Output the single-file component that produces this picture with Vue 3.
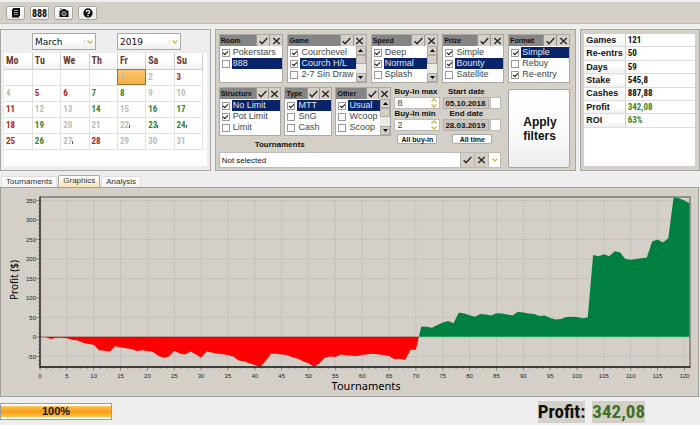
<script setup>
import { ref } from 'vue'

const weekdays = ['Mo', 'Tu', 'We', 'Th', 'Fr', 'Sa', 'Su']
const wins = [7, 8, 14, 16, 17, 19, 23, 24, 26]
const losses = [3, 5, 6, 11, 18, 25, 28]
const marked = [22, 23, 24, 27]
const weeks = [0, 1, 2, 3, 4].map((w) =>
  weekdays.map((_, d) => {
    const day = w * 7 + d - 3
    return day > 0 ? day : null
  })
)
const dayClass = (day) => ({
  win: wins.includes(day),
  loss: losses.includes(day),
  today: day === 1,
  marked: marked.includes(day)
})

const topFilters = ref([
  { name: 'Room', grow: 65, items: [['Pokerstars', true], ['888', false]], active: 1 },
  { name: 'Game', grow: 80, scroll: true, items: [['Courchevel', true], ['Courch H/L', true], ['2-7 Sin Draw', false]], active: 1 },
  { name: 'Speed', grow: 68, scroll: true, items: [['Deep', true], ['Normal', true], ['Splash', false]], active: 1 },
  { name: 'Prize', grow: 62, items: [['Simple', true], ['Bounty', true], ['Satellite', false]], active: 1 },
  { name: 'Format', grow: 62, items: [['Simple', true], ['Rebuy', false], ['Re-entry', true]], active: 0 }
])
const lowFilters = ref([
  { name: 'Structure', grow: 62, items: [['No Limit', true], ['Pot Limit', true], ['Limit', false]], active: 0 },
  { name: 'Type', grow: 47, items: [['MTT', true], ['SnG', false], ['Cash', false]], active: 0 },
  { name: 'Other', grow: 55, scroll: true, items: [['Usual', true], ['Wcoop', false], ['Scoop', false]], active: 0 }
])
const filterRows = [
  { key: 'top', list: topFilters },
  { key: 'low', list: lowFilters }
]

const stats = [
  ['Games', '121'],
  ['Re-entrs', '50'],
  ['Days', '59'],
  ['Stake', '545,8'],
  ['Cashes', '887,88'],
  ['Profit', '342,08'],
  ['ROI', '63%']
]

const profits = [
  0, 0, -5, -2, -2, -3, -7, -9, -15, -18, -20, -34, -35, -37, -24, -26, -29, -31, -36, -34,
  -36, -38, -48, -53, -50, -35, -42, -45, -37, -44, -53, -37, -40, -42, -44, -46, -50, -60, -62, -67,
  -72, -76, -62, -43, -43, -45, -46, -52, -56, -62, -67, -76, -68, -53, -50, -51, -45, -47, -48, -49,
  -46, -44, -43, -45, -46, -49, -57, -56, -59, -33, -33, 27, 26, 24, 31, 37, 41, 35, 63, 60,
  56, 52, 59, 58, 55, 61, 60, 58, 55, 65, 63, 60, 59, 54, 55, 49, 45, 46, 51, 52,
  51, 48, 50, 210, 207, 212, 207, 220, 217, 200, 198, 200, 202, 204, 245, 250, 242, 253, 359, 356,
  350, 342
]
const px = (i) => 39 + i * 5.37
const py = (v) => 149 - v * 0.39
const crossing = 70 + 33 / 60
const lossArea =
  profits.slice(0, 71).map((v, i) => `${px(i)},${py(v)}`).join(' ') +
  ` ${px(crossing)},${py(0)} ${px(0)},${py(0)}`
const winArea =
  `${px(crossing)},${py(0)} ` +
  profits.slice(71).map((v, i) => `${px(i + 71)},${py(v)}`).join(' ') +
  ` ${px(121)},${py(0)}`
const xTicks = Array.from({ length: 25 }, (_, i) => i * 5)
const yTicks = [350, 300, 250, 200, 150, 100, 50, 0, -50]
const xMinor = Array.from({ length: 97 }, (_, i) => i * 1.25)
const yMinor = Array.from({ length: 43 }, (_, i) => i * 10 - 70)
</script>

<template>
  <div class="app">
    <header class="toolbar">
      <button type="button" aria-label="Report">
        <svg width="10" height="10" viewBox="0 0 10 10">
          <path d="M2 0h7v8h-1v1.5H1V1h1z" fill="#111" />
          <path d="M3 2.5h4M3 4.5h4M3 6.5h4" stroke="#bbb" stroke-width=".8" />
        </svg>
      </button>
      <button type="button">888</button>
      <button type="button" aria-label="Screenshot">
        <svg width="10" height="10" viewBox="0 0 10 10">
          <path d="M.5 2.5h2L3.500 1h3l1 1.500h2V9h-9z" fill="#111" />
          <circle cx="5" cy="5.700" r="2.100" fill="none" stroke="#ddd" stroke-width=".9" />
          <circle cx="5" cy="5.700" r=".6" fill="#ddd" />
          <path d="M1.200 1h1.500" stroke="#111" />
        </svg>
      </button>
      <button type="button" aria-label="Help">
        <svg width="10" height="10" viewBox="0 0 10 10">
          <circle cx="5" cy="5" r="4.700" fill="#111" />
          <path d="M3.300 4C3.300 1.800 6.800 1.900 6.700 3.900 6.600 5 5 5 5 6.200" fill="none" stroke="#fff" stroke-width="1.200" />
          <circle cx="5" cy="7.700" r=".8" fill="#fff" />
        </svg>
      </button>
    </header>

    <main>
      <div class="top">
        <section class="panel calendar">
          <div class="period">
            <span class="drop">
              <select aria-label="Month"><option>March</option></select>
              <svg width="6" height="4" viewBox="0 0 6 4"><path d="M.5.5 3 3 5.500.5" /></svg>
            </span>
            <span class="drop">
              <select aria-label="Year"><option>2019</option></select>
              <svg width="6" height="4" viewBox="0 0 6 4"><path d="M.5.5 3 3 5.500.5" /></svg>
            </span>
          </div>
          <div class="sheet">
            <table class="days">
              <thead>
                <tr><th v-for="d in weekdays" :key="d" scope="col">{{ d }}</th></tr>
              </thead>
              <tbody>
                <tr v-for="(week, w) in weeks" :key="w">
                  <td v-for="(day, d) in week" :key="d" :class="dayClass(day)">{{ day }}</td>
                </tr>
              </tbody>
            </table>
          </div>
        </section>

        <section class="panel filters">
          <div v-for="row in filterRows" :key="row.key" :class="['area', row.key]">
            <fieldset
              v-for="f in row.list.value"
              :key="f.name"
              class="box"
              :style="{ flexGrow: f.grow }"
              :aria-label="f.name"
            >
              <div class="box-head">
                <span>{{ f.name }}</span>
                <button type="button" :aria-label="'Select all: ' + f.name">
                  <svg width="9" height="8" viewBox="0 0 9 8"><path d="M.7 4.200 3 6.700 8.300 1" /></svg>
                </button>
                <button type="button" :aria-label="'Clear: ' + f.name">
                  <svg width="9" height="8" viewBox="0 0 9 8"><path d="M1.300 1 7.700 7M7.700 1 1.300 7" /></svg>
                </button>
              </div>
              <div class="box-body">
                <div class="options">
                  <label v-for="(item, i) in f.items" :key="item[0]">
                    <input v-model="item[1]" type="checkbox" />
                    <span :class="{ active: i === f.active }">{{ item[0] }}</span>
                  </label>
                </div>
                <div v-if="f.scroll" class="scroll" aria-hidden="true">
                  <i><svg width="5" height="3" viewBox="0 0 5 3"><path d="M0 3 2.500 0 5 3z" /></svg></i>
                  <i class="thumb"></i>
                  <i><svg width="5" height="3" viewBox="0 0 5 3"><path d="M0 0 2.500 3 5 0z" /></svg></i>
                </div>
              </div>
            </fieldset>

            <template v-if="row.key === 'low'">
              <div class="limits">
                <label for="buy-max">Buy-In max</label>
                <span class="spin">
                  <input id="buy-max" type="text" value="8" />
                  <svg width="6" height="10" viewBox="0 0 6 10"><path d="M.5 3.500 3 1l2.500 2.500M.5 6.500 3 9l2.500-2.500" /></svg>
                </span>
                <label for="buy-min">Buy-In min</label>
                <span class="spin">
                  <input id="buy-min" type="text" value="2" />
                  <svg width="6" height="10" viewBox="0 0 6 10"><path d="M.5 3.500 3 1l2.500 2.500M.5 6.500 3 9l2.500-2.500" /></svg>
                </span>
                <button type="button" class="small">All buy-in</button>
              </div>
              <div class="dates">
                <label for="date-start">Start date</label>
                <span class="date">
                  <input id="date-start" type="text" value="05.10.2018" />
                  <button type="button" aria-label="Pick start date"></button>
                </span>
                <label for="date-end">End date</label>
                <span class="date">
                  <input id="date-end" type="text" value="28.03.2019" />
                  <button type="button" aria-label="Pick end date"></button>
                </span>
                <button type="button" class="small">All time</button>
              </div>
            </template>
          </div>

          <div class="area pick">
            <label for="tour">Tournaments</label>
            <div class="combo">
              <input id="tour" type="text" value="Not selected" />
              <button type="button" aria-label="Select all tournaments">
                <svg width="9" height="8" viewBox="0 0 9 8"><path d="M.7 4.200 3 6.700 8.300 1" /></svg>
              </button>
              <button type="button" aria-label="Clear tournaments">
                <svg width="9" height="8" viewBox="0 0 9 8"><path d="M1.300 1 7.700 7M7.700 1 1.300 7" /></svg>
              </button>
              <button type="button" class="open" aria-label="Open list">
                <svg width="6" height="4" viewBox="0 0 6 4"><path d="M.5.5 3 3 5.500.5" /></svg>
              </button>
            </div>
          </div>
          <button type="button" class="apply">Apply<br />filters</button>
        </section>

        <section class="panel summary">
          <div class="sheet">
            <table class="stats">
              <tbody>
                <tr v-for="s in stats" :key="s[0]">
                  <th scope="row">{{ s[0] }}</th>
                  <td :class="{ win: s[0] === 'Profit' || s[0] === 'ROI' }">{{ s[1] }}</td>
                </tr>
              </tbody>
            </table>
          </div>
        </section>
      </div>

      <nav class="tabs">
        <a href="#tournaments">Tournaments</a>
        <a href="#graphics" class="current">Graphics</a>
        <a href="#analysis">Analysis</a>
      </nav>

      <section class="chart">
        <svg viewBox="0 0 697 208" role="img" aria-label="Profit by tournaments">
          <g stroke="#c5c2bf" stroke-width="1">
            <line v-for="t in xTicks" :key="'x' + t" :x1="px(t)" :x2="px(t)" y1="12" y2="179" />
            <line v-for="t in yTicks" :key="'y' + t" x1="39" x2="689" :y1="py(t)" :y2="py(t)" />
          </g>
          <g stroke="#777" stroke-width=".6">
            <line v-for="t in xMinor" :key="'mx' + t" :x1="px(t)" :x2="px(t)" y1="179" y2="181" />
            <line v-for="t in yMinor" :key="'my' + t" x1="37" x2="39" :y1="py(t)" :y2="py(t)" />
            <line v-for="t in xTicks" :key="'tx' + t" :x1="px(t)" :x2="px(t)" y1="179" y2="183" />
            <line v-for="t in yTicks" :key="'ty' + t" x1="35" x2="39" :y1="py(t)" :y2="py(t)" />
          </g>
          <polygon :points="lossArea" fill="#fe0000" />
          <polygon :points="winArea" fill="#008040" />
          <line x1="39" :x2="px(crossing)" y1="149" y2="149" stroke="#8c2a20" stroke-width=".6" />
          <line :x1="px(crossing)" x2="689" y1="149" y2="149" stroke="#7fe0a8" stroke-width=".6" />
          <path d="M39 9H689V179" fill="none" stroke="#7b7975" stroke-width="1.500" />
          <path d="M39 8.500V179H689.500" fill="none" stroke="#111" stroke-width="1.300" />
          <g class="ticks">
            <text v-for="t in xTicks" :key="'lx' + t" :x="px(t)" y="190" text-anchor="middle">{{ t }}</text>
            <text v-for="t in yTicks" :key="'ly' + t" x="35" :y="py(t) + 2" text-anchor="end">{{ t }}</text>
          </g>
          <text class="title" x="365" y="202" text-anchor="middle">Tournaments</text>
          <text class="axis" transform="translate(17 92) rotate(-90)" text-anchor="middle">Profit ($)</text>
        </svg>
      </section>
    </main>

    <footer>
      <div class="progress" role="progressbar" aria-label="Loading" aria-valuenow="100" aria-valuemin="0" aria-valuemax="100">
        <span>100%</span>
      </div>
      <div class="total">
        <span class="caption">Profit:</span>
        <output>342,08</output>
      </div>
    </footer>
  </div>
</template>

<style>
body {
  background: #eee;
}
</style>

<style scoped>
.app {
  padding-top: 2px;
  font-family: "Liberation Sans", sans-serif;
  font-size: 9px;
  color: #111;
}
.app *,
.app *::before,
.app *::after {
  box-sizing: border-box;
}
button,
input,
select {
  font: inherit;
  color: inherit;
  margin: 0;
  padding: 0;
  border-radius: 0;
  min-width: 0;
}
button {
  display: flex;
  align-items: center;
  justify-content: center;
}
svg {
  display: block;
}
.toolbar {
  display: flex;
  gap: 5px;
  height: 22px;
  padding: 4px 6px;
  background: #d4d0c8;
  border-bottom: 1px solid #c4c0b4;
}
.toolbar button {
  width: 19px;
  height: 14px;
  border: 1px solid #a9a7a2;
  border-radius: 2px;
  background: linear-gradient(#fff, #e9e9e9);
  font: bold 10px "Liberation Sans Narrow", "Roboto Condensed", sans-serif;
}
.top {
  display: grid;
  grid-template-columns: 211fr 362fr 120fr;
  gap: 4px;
  padding-top: 5px;
}
.panel {
  border: 1px solid #a8a7a4;
  height: 142px;
  background: #d4d0c8;
  min-width: 0;
}
.calendar {
  background: #eee;
  padding: 3px 3px 4px;
  display: flex;
  flex-direction: column;
  gap: 3px;
}
.period {
  display: flex;
  gap: 21px;
  padding-left: 28px;
}
.drop {
  display: flex;
  align-items: center;
  width: 64px;
  height: 17px;
  border: 1px solid #aaa;
  background: linear-gradient(#fff 40%, #eee);
}
.drop select {
  flex: 1;
  appearance: none;
  border: 0;
  background: none;
  padding-left: 2px;
  font: 9px "DejaVu Sans", sans-serif;
}
.drop svg {
  width: 11px;
  height: 4px;
  border-left: 1px solid #ddd;
}
.drop path,
.spin path {
  fill: none;
  stroke: #d8b43c;
  stroke-width: 1.3;
}
.sheet {
  flex: 1;
  background: #fff;
}
.days {
  width: 199px;
  border-collapse: collapse;
  table-layout: fixed;
  font: bold 9px/14px "Liberation Sans Narrow", "Roboto Condensed", sans-serif;
  color: #bcbcb5;
}
.days th,
.days td {
  height: 16px;
  padding: 0 2px;
  text-align: left;
  border: 1px solid #e2e2e2;
  border-left: 0;
  border-top: 0;
}
.days th {
  font-size: 10px;
  color: #6b3a32;
  background: linear-gradient(#fff 50%, #eee);
  border-color: #ccc;
}
.days .win,
.stats .win {
  color: #3a8428;
}
.days .loss {
  color: #b22222;
}
.days .today {
  background: linear-gradient(#f9c878, #f3ae3c);
  outline: 1px solid #93743c;
  outline-offset: -1px;
}
.days .marked::after {
  content: "";
  display: inline-block;
  width: 1px;
  height: 3px;
  background: #555;
}
.filters {
  display: grid;
  grid-template-columns: 283fr 62fr;
  grid-template-rows: 49px 49px 28px;
  column-gap: 7px;
  row-gap: 4px;
  padding: 4px 5px 0 3px;
}
.area {
  display: flex;
  min-width: 0;
}
.top > .filters > .area.top {
  display: flex;
  grid-column: 1 / 3;
  gap: 4px;
  padding: 0;
}
.area.low {
  gap: 3px;
}
.box {
  flex: 1 1 0;
  min-width: 0;
  margin: 0;
  padding: 0;
  border: 1px solid #aaa9a5;
  background: #fff;
  display: flex;
  flex-direction: column;
}
.box-head {
  display: flex;
  height: 11px;
  background: #858585;
  font: bold 7px/11px "Liberation Sans", sans-serif;
}
.box-head span {
  flex: 1;
  min-width: 0;
  padding-left: 1px;
}
.box-head button {
  width: 13px;
  border: 0;
  border-left: 1px solid #9b9994;
  background: #d4d0c8;
}
.low .box-head button {
  width: 12px;
}
.box-head path,
.combo path {
  fill: none;
  stroke: #222;
  stroke-width: 1.3;
}
.combo .open path {
  stroke: #d8b43c;
}
.box-body {
  display: flex;
  flex: 1;
  min-height: 0;
}
.options {
  flex: 1;
  min-width: 0;
  padding-top: 1px;
}
.options label {
  display: flex;
  align-items: center;
  gap: 2px;
  height: 11px;
  padding-left: 2px;
  color: #444;
  white-space: nowrap;
}
.options input {
  appearance: none;
  flex: none;
  width: 8px;
  height: 8px;
  border: 1px solid #999;
  background: #fff;
  display: grid;
  place-items: center;
}
.options input:checked::after {
  content: "";
  width: 5px;
  height: 3px;
  border: solid #111;
  border-width: 0 0 1px 1px;
  transform: rotate(-45deg);
}
.options span {
  flex: 1;
  padding-left: 1px;
  line-height: 11px;
}
.options .active {
  background: #0a246a;
  color: #dfe4f2;
}
.scroll {
  width: 10px;
  display: flex;
  flex-direction: column;
  justify-content: space-between;
  background: #eceae6;
}
.scroll i {
  height: 9px;
  display: flex;
  align-items: center;
  justify-content: center;
  background: #d4d0c8;
  border: 1px solid #aeaba4;
}
.scroll .thumb {
  margin-bottom: auto;
}
.limits,
.dates {
  display: flex;
  flex-direction: column;
  flex: 47 1 0;
  min-width: 0;
  height: 58px;
  font: bold 8px/10px "Liberation Sans", sans-serif;
}
.dates {
  flex-grow: 59;
  align-items: stretch;
}
.dates label {
  padding-right: 12px;
  text-align: center;
}
.limits label {
  white-space: nowrap;
}
.spin,
.date {
  display: flex;
  align-items: center;
  height: 12px;
}
.spin {
  border: 1px solid #bbb;
  background: #fff;
  padding-right: 2px;
}
.spin input {
  flex: 1;
  width: 0;
  height: 10px;
  border: 0;
  padding-left: 2px;
  background: none;
  font: 9px "Liberation Sans", sans-serif;
  color: #444;
}
.date {
  gap: 1px;
}
.date input {
  flex: 1;
  width: 0;
  height: 12px;
  border: 1px solid #b3b0a9;
  background: #c9c6bf;
  font-size: 8px;
  font-weight: bold;
  padding-left: 1px;
}
.date button {
  width: 11px;
  height: 12px;
  border: 1px solid #bbb;
  background: #fff;
}
.small {
  align-self: center;
  width: 40px;
  height: 10px;
  margin-top: 3px;
  border: 1px solid #aaa;
  border-radius: 2px;
  background: #fff;
  font: bold 7px "Liberation Sans", sans-serif;
  white-space: nowrap;
}
.pick {
  flex-direction: column;
  justify-content: flex-end;
  gap: 3px;
}
.pick label {
  padding-left: 36px;
  font: bold 8px/9px "Liberation Sans", sans-serif;
}
.combo {
  display: flex;
  height: 16px;
  border: 1px solid #bbb;
  background: #fff;
}
.combo input {
  flex: 1;
  border: 0;
  padding-left: 2px;
  background: none;
  font-size: 8px;
}
.combo button {
  width: 14px;
  border: 0;
  border-left: 1px solid #bbb8b0;
  background: #d4d0c8;
}
.combo .open {
  width: 12px;
  background: #fff;
}
.apply {
  grid-column: 2;
  grid-row: 2 / 4;
  margin-top: 2px;
  border: 1px solid #a5a5a5;
  border-radius: 2px;
  background: linear-gradient(#fff, #fafafa 60%, #ececec);
  font: bold 12px/14px "Liberation Sans", sans-serif;
  display: block;
  text-align: left;
  padding-left: 14px;
}
.summary {
  padding: 4px 4px 4px 3px;
  display: flex;
}
.stats {
  width: 100%;
  height: 94px;
  border-collapse: collapse;
  font: bold 9px/11px "Liberation Sans", sans-serif;
}
.stats th,
.stats td {
  padding: 0 2px;
  text-align: left;
  border-bottom: 1px solid #ddd;
  white-space: nowrap;
}
.stats th {
  width: 40px;
  border-right: 1px solid #ccc;
  background: linear-gradient(#fff 50%, #eee);
}
.stats td {
  font-family: "Liberation Sans Narrow", "Roboto Condensed", sans-serif;
}
.tabs {
  display: flex;
  align-items: flex-end;
  gap: 1px;
  height: 16px;
  padding-left: 1px;
  line-height: 10px;
}
.tabs a {
  padding: 0 4px;
  font-size: 8px;
  color: #333;
  text-decoration: none;
  background: linear-gradient(#fff, #f1f1f1);
  border: 1px solid #ddd;
  border-bottom: 0;
  border-radius: 2px 2px 0 0;
}
.tabs .current {
  height: 12px;
  padding: 0 4px;
  background: linear-gradient(#fff, #fbe3b4);
  border-color: #a9a7a2;
}
.chart {
  margin-right: 1px;
  border: 1px solid #a09e9a;
  background: #d4d0c8;
}
.chart svg {
  width: 100%;
  height: auto;
}
.ticks {
  font-size: 6px;
  fill: #222;
}
.title {
  font: 11px "Noto Sans", sans-serif;
}
.axis {
  font: 10px "Noto Sans", sans-serif;
}
footer {
  display: flex;
  align-items: flex-start;
  justify-content: space-between;
  padding: 4px 55px 0 0;
}
.progress {
  width: 112px;
  height: 17px;
  margin-top: 2px;
  padding: 2px 0;
  border: 1px solid #a09e9a;
  background: #fff;
}
.progress span {
  display: block;
  text-align: center;
  font: bold 11px/11px "Liberation Sans", sans-serif;
  background: linear-gradient(#fbc462, #f6a010 50%, #fbc050);
}
.total {
  display: flex;
  gap: 7px;
  font: bold 19px/22px "Liberation Sans Narrow", "Roboto Condensed", sans-serif;
}
.total span,
.total output {
  background: #d4d0c8;
}
.total output {
  color: #3f7026;
}
</style>
